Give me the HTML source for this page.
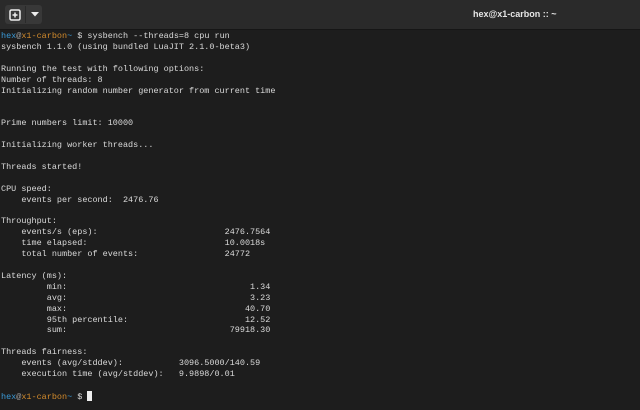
<!DOCTYPE html>
<html><head><style>
body{margin:0;width:640px;height:410px;background:#1d1d1d;overflow:hidden;font-family:"Liberation Sans",sans-serif}
.hdr{position:absolute;left:0;top:0;width:640px;height:29px;background:#2a2a2a;border-bottom:1px solid #161616}
.btns{position:absolute;left:5px;top:5px;width:37px;height:19px;background:#383838;border-radius:3px}
.title{position:absolute;left:473px;top:9px;font-size:9px;font-weight:bold;color:#e6e6e6}
pre{position:absolute;left:1px;top:31px;margin:0;font-family:"Liberation Mono",monospace;font-size:8.47px;line-height:10.9px;color:#dadada}
.b{color:#3a9ad8}.o{color:#d38b2c}.g{color:#a0a0a0}
.cur{display:inline-block;width:5px;height:10px;background:#eee;vertical-align:-2px}
</style></head><body>
<div class="hdr">
<div class="btns"></div>
<svg style="position:absolute;left:9px;top:9px" width="12" height="12" viewBox="0 0 12 12"><rect x="1" y="1" width="10" height="10" rx="1.5" fill="none" stroke="#eee" stroke-width="1.5"/><path d="M6 3.5v5M3.5 6h5" stroke="#eee" stroke-width="1.5"/></svg>
<div style="position:absolute;left:25px;top:6px;width:1px;height:17px;background:#2a2a2a"></div>
<svg style="position:absolute;left:31px;top:12px" width="8" height="5"><path d="M0 0h8L4 4.5z" fill="#eee"/></svg>
<div class="title">hex@x1-carbon :: ~</div>
</div>
<pre><span class="b">hex</span><span class="g">@</span><span class="o">x1-carbon</span><span class="b">~</span> $ sysbench --threads=8 cpu run
sysbench 1.1.0 (using bundled LuaJIT 2.1.0-beta3)

Running the test with following options:
Number of threads: 8
Initializing random number generator from current time


Prime numbers limit: 10000

Initializing worker threads...

Threads started!

CPU speed:
    events per second:  2476.76

Throughput:
    events/s (eps):                         2476.7564
    time elapsed:                           10.0018s
    total number of events:                 24772

Latency (ms):
         min:                                    1.34
         avg:                                    3.23
         max:                                   40.70
         95th percentile:                       12.52
         sum:                                79918.30

Threads fairness:
    events (avg/stddev):           3096.5000/140.59
    execution time (avg/stddev):   9.9898/0.01

<span class="b">hex</span><span class="g">@</span><span class="o">x1-carbon</span><span class="b">~</span> $ <span class="cur"></span></pre>
</body></html>
